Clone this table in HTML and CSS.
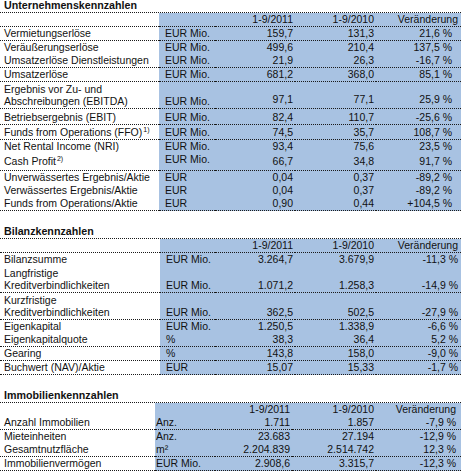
FILE: index.html
```html
<!DOCTYPE html>
<html lang="de">
<head>
<meta charset="utf-8">
<title>Kennzahlen</title>
<link rel="stylesheet" href="styles.css">
</head>
<body>
<div class="sheet">
  <section class="block s1">
    <div class="title">Unternehmenskennzahlen</div>
    <div class="row h14 head"><div class="lbl"></div><div class="unit"></div><div class="num">1-9/2011</div><div class="num">1-9/2010</div><div class="num chg">Veränderung</div></div>
    <div class="row h14"><div class="lbl">Vermietungserlöse</div><div class="unit">EUR Mio.</div><div class="num">159,7</div><div class="num">131,3</div><div class="num chg">21,6 %</div></div>
    <div class="row h13"><div class="lbl">Veräußerungserlöse</div><div class="unit">EUR Mio.</div><div class="num">499,6</div><div class="num">210,4</div><div class="num chg">137,5 %</div></div>
    <div class="row h14"><div class="lbl">Umsatzerlöse Dienstleistungen</div><div class="unit">EUR Mio.</div><div class="num">21,9</div><div class="num">26,3</div><div class="num chg">-16,7 %</div></div>
    <div class="row h14"><div class="lbl">Umsatzerlöse</div><div class="unit">EUR Mio.</div><div class="num">681,2</div><div class="num">368,0</div><div class="num chg">85,1 %</div></div>
    <div class="row h27 lift"><div class="lbl two">Ergebnis vor Zu- und<br>Abschreibungen (EBITDA)</div><div class="unit">EUR Mio.</div><div class="num">97,1</div><div class="num">77,1</div><div class="num chg">25,9 %</div></div>
    <div class="row h16"><div class="lbl">Betriebsergebnis (EBIT)</div><div class="unit">EUR Mio.</div><div class="num">82,4</div><div class="num">110,7</div><div class="num chg">-25,6 %</div></div>
    <div class="row h15"><div class="lbl"><span>Funds from Operations (FFO)<sup class="fn">1)</sup></span></div><div class="unit">EUR Mio.</div><div class="num">74,5</div><div class="num">35,7</div><div class="num chg">108,7 %</div></div>
    <div class="row h13"><div class="lbl">Net Rental Income (NRI)</div><div class="unit">EUR Mio.</div><div class="num">93,4</div><div class="num">75,6</div><div class="num chg">23,5 %</div></div>
    <div class="row h18 mid"><div class="lbl"><span>Cash Profit<sup class="fn">2)</sup></span></div><div class="unit">EUR Mio.</div><div class="num">66,7</div><div class="num">34,8</div><div class="num chg">91,7 %</div></div>
    <div class="row h13"><div class="lbl">Unverwässertes Ergebnis/Aktie</div><div class="unit">EUR</div><div class="num">0,04</div><div class="num">0,37</div><div class="num chg">-89,2 %</div></div>
    <div class="row h13"><div class="lbl">Verwässertes Ergebnis/Aktie</div><div class="unit">EUR</div><div class="num">0,04</div><div class="num">0,37</div><div class="num chg">-89,2 %</div></div>
    <div class="row h14"><div class="lbl">Funds from Operations/Aktie</div><div class="unit">EUR</div><div class="num">0,90</div><div class="num">0,44</div><div class="num chg">+104,5 %</div></div>
  </section>

  <section class="block s2">
    <div class="title">Bilanzkennzahlen</div>
    <div class="row h14 head"><div class="lbl"></div><div class="unit"></div><div class="num">1-9/2011</div><div class="num">1-9/2010</div><div class="num chg">Veränderung</div></div>
    <div class="row h13"><div class="lbl">Bilanzsumme</div><div class="unit">EUR Mio.</div><div class="num">3.264,7</div><div class="num">3.679,9</div><div class="num chg">-11,3 %</div></div>
    <div class="row h27"><div class="lbl two">Langfristige<br>Kreditverbindlichkeiten</div><div class="unit">EUR Mio.</div><div class="num">1.071,2</div><div class="num">1.258,3</div><div class="num chg">-14,9 %</div></div>
    <div class="row h27"><div class="lbl two">Kurzfristige<br>Kreditverbindlichkeiten</div><div class="unit">EUR Mio.</div><div class="num">362,5</div><div class="num">502,5</div><div class="num chg">-27,9 %</div></div>
    <div class="row h13"><div class="lbl">Eigenkapital</div><div class="unit">EUR Mio.</div><div class="num">1.250,5</div><div class="num">1.338,9</div><div class="num chg">-6,6 %</div></div>
    <div class="row h14"><div class="lbl">Eigenkapitalquote</div><div class="unit">%</div><div class="num">38,3</div><div class="num">36,4</div><div class="num chg">5,2 %</div></div>
    <div class="row h14"><div class="lbl">Gearing</div><div class="unit">%</div><div class="num">143,8</div><div class="num">158,0</div><div class="num chg">-9,0 %</div></div>
    <div class="row h14"><div class="lbl">Buchwert (NAV)/Aktie</div><div class="unit">EUR</div><div class="num">15,07</div><div class="num">15,33</div><div class="num chg">-1,7 %</div></div>
  </section>

  <section class="block s3">
    <div class="title">Immobilienkennzahlen</div>
    <div class="row h13 head"><div class="lbl"></div><div class="unit"></div><div class="num">1-9/2011</div><div class="num">1-9/2010</div><div class="num chg">Veränderung</div></div>
    <div class="row h14"><div class="lbl">Anzahl Immobilien</div><div class="unit">Anz.</div><div class="num">1.711</div><div class="num">1.857</div><div class="num chg">-7,9 %</div></div>
    <div class="row h13"><div class="lbl">Mieteinheiten</div><div class="unit">Anz.</div><div class="num">23.683</div><div class="num">27.194</div><div class="num chg">-12,9 %</div></div>
    <div class="row h14"><div class="lbl">Gesamtnutzfläche</div><div class="unit">m²</div><div class="num">2.204.839</div><div class="num">2.514.742</div><div class="num chg">12,3 %</div></div>
    <div class="row h14"><div class="lbl">Immobilienvermögen</div><div class="unit">EUR Mio.</div><div class="num">2.908,6</div><div class="num">3.315,7</div><div class="num chg">-12,3 %</div></div>
  </section>
</div>
</body>
</html>
```
FILE: styles.css
```css
* {
  box-sizing: border-box;
  margin: 0;
  padding: 0;
}

body {
  margin: 0;
  background: #ffffff;
  font-family: "Liberation Sans", Arial, sans-serif;
  font-size: 10.5px;
  color: #111111;
}

.sheet {
  width: 461px;
  display: flex;
  flex-direction: column;
  gap: 15px;
}

.block {
  --cols: 159px 56px 80px 81px 85px;
}

.s2 {
  --cols: 160px 55px 80px 81px 85px;
}

.s3 {
  --cols: 155px 60px 77px 84px 85px;
}

.title {
  height: 13px;
  line-height: 13px;
  padding-left: 4px;
  font-weight: bold;
  font-size: 10.7px;
  border-bottom: 1px dotted #1a1a1a;
  display: flex;
  align-items: flex-end;
  white-space: nowrap;
}

.row {
  display: grid;
  grid-template-columns: var(--cols);
}

.row > div {
  display: flex;
  align-items: flex-end;
  line-height: 13px;
  white-space: nowrap;
  border-bottom: 1px dotted #1a1a1a;
  overflow: visible;
}

.h13 { height: 13px; }
.h14 { height: 14px; }
.h15 { height: 15px; }
.h16 { height: 16px; }
.h18 { height: 18px; }
.h27 { height: 27px; }

.lbl {
  padding-left: 4px;
  background: #ffffff;
}

.lbl.two {
  line-height: 12px;
  padding-bottom: 1px;
}

.unit {
  padding-left: 6px;
  background: #a8c2e2;
}

.s3 .unit {
  padding-left: 1px;
}

.num {
  justify-content: flex-end;
  padding-right: 2px;
  background: #a8c2e2;
}

.s1 .chg {
  padding-right: 9px;
}

.s1 .head .chg {
  padding-right: 3px;
}

.s2 .chg {
  padding-right: 3px;
}

.s3 .chg {
  padding-right: 5px;
}

.lift .num {
  padding-bottom: 2px;
}

.mid .lbl,
.mid .num {
  padding-bottom: 2px;
}

.mid .unit {
  padding-bottom: 4px;
}

.fn {
  font-size: 7px;
  line-height: 0;
  vertical-align: 4px;
  margin-left: 1px;
}
```
